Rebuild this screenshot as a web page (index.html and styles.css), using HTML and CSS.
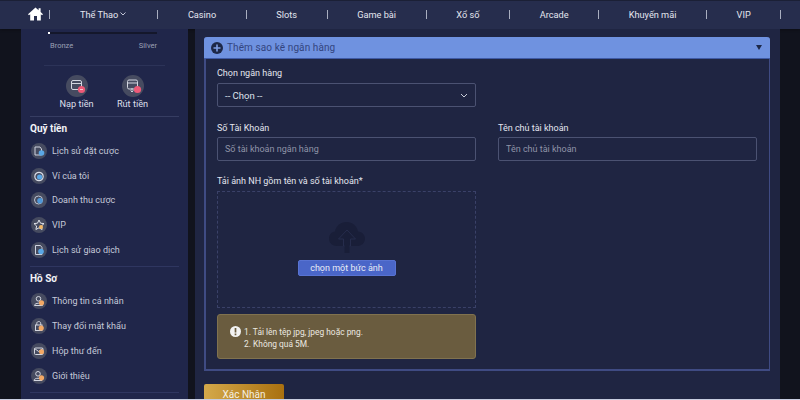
FILE: index.html
```html
<!DOCTYPE html>
<html lang="en">
<head>
  <meta charset="UTF-8" />
  <meta name="viewport" content="width=device-width, initial-scale=1.0"/>
  <title>Thêm sao kê ngân hàng</title>
  <link rel="stylesheet" href="styles.css">
</head>
<body>
  <nav class="topbar">
    <a class="nav-link nav-home">
      <svg width="15" height="14" viewBox="0 0 15 14"><path fill="#fff" d="M7.5 0.5 L0 7.2 L1 8.2 L2.2 7.2 V13.5 H6 V9 H9 V13.5 H12.8 V7.2 L14 8.2 L15 7.2 L12.6 5 V1.2 H10.6 V3.2 Z"/></svg>
    </a>
    <a class="nav-link nav-drop">Thể Thao
      <svg width="6" height="4" viewBox="0 0 6 4"><path fill="none" stroke="#d5d9e6" stroke-width="0.9" d="M0.5 0.5 L3 3 L5.5 0.5"/></svg>
    </a>
    <a class="nav-link">Casino</a>
    <a class="nav-link">Slots</a>
    <a class="nav-link">Game bài</a>
    <a class="nav-link">Xổ số</a>
    <a class="nav-link">Arcade</a>
    <a class="nav-link">Khuyến mãi</a>
    <a class="nav-link">VIP</a>
  </nav>

  <div class="page">
    <aside class="sidebar">
      <div class="rank">
        <div class="rank-bar"><span class="rank-dot"></span></div>
        <div class="rank-labels"><span>Bronze</span><span>Silver</span></div>
      </div>
      <div class="quick">
        <a class="quick-item">
          <span class="quick-icon">
            <svg width="22" height="22" viewBox="0 0 22 22"><rect x="5.5" y="5.5" width="10" height="9" rx="1.5" fill="none" stroke="#d3d6e0"/><path stroke="#d3d6e0" d="M6 8.5 H15"/><circle cx="15.5" cy="14.5" r="3.6" fill="#ee5a78"/><path stroke="#f7c5cf" d="M14 14.5 H17"/></svg>
          </span>
          Nạp tiền
        </a>
        <a class="quick-item">
          <span class="quick-icon">
            <svg width="22" height="22" viewBox="0 0 22 22"><rect x="5.5" y="5" width="10" height="9" rx="1.5" fill="none" stroke="#d3d6e0"/><path stroke="#d3d6e0" d="M6 8 H15 M10 13 V17 M8.5 15.5 L10 17 L11.5 15.5"/><circle cx="15.5" cy="14.5" r="3.6" fill="#ee5a78"/></svg>
          </span>
          Rút tiền
        </a>
      </div>

      <section class="menu">
        <h3>Quỹ tiền</h3>
        <a class="menu-item">
          <span class="menu-icon"><svg width="16" height="16" viewBox="0 0 16 16"><path fill="none" stroke="#cfd3df" d="M4 4 H9 L10.5 6 V12 H4 Z"/><circle cx="10.5" cy="10" r="2.8" fill="#5aa7e6"/></svg></span>
          Lịch sử đặt cược
        </a>
        <a class="menu-item">
          <span class="menu-icon"><svg width="16" height="16" viewBox="0 0 16 16"><circle cx="8" cy="8.5" r="4.2" fill="none" stroke="#d8dbe4" stroke-width="1.2"/><circle cx="8.6" cy="9" r="2.6" fill="#5aa7e6"/></svg></span>
          Ví của tôi
        </a>
        <a class="menu-item">
          <span class="menu-icon"><svg width="16" height="16" viewBox="0 0 16 16"><circle cx="7.5" cy="8" r="4" fill="none" stroke="#bfc4d2"/><circle cx="9" cy="8.8" r="2.8" fill="#4f97d8"/></svg></span>
          Doanh thu cược
        </a>
        <a class="menu-item">
          <span class="menu-icon"><svg width="16" height="16" viewBox="0 0 16 16"><path fill="none" stroke="#e1e3ea" d="M8 3 L9.5 6.2 L13 6.6 L10.4 9 L11.1 12.5 L8 10.8 L4.9 12.5 L5.6 9 L3 6.6 L6.5 6.2 Z"/><circle cx="10" cy="10" r="2" fill="#f3b765"/></svg></span>
          VIP
        </a>
        <a class="menu-item">
          <span class="menu-icon"><svg width="16" height="16" viewBox="0 0 16 16"><path fill="none" stroke="#cfd3df" d="M4.5 3.5 H9.5 L11 5.5 V12.5 H4.5 Z"/><circle cx="10" cy="9.5" r="2.8" fill="#5aa7e6"/></svg></span>
          Lịch sử giao dịch
        </a>
      </section>

      <section class="menu">
        <h3>Hồ Sơ</h3>
        <a class="menu-item">
          <span class="menu-icon"><svg width="16" height="16" viewBox="0 0 16 16"><circle cx="7.5" cy="5.8" r="2.3" fill="none" stroke="#d3d6e0"/><path fill="none" stroke="#d3d6e0" d="M3.5 12.5 C3.5 9.5 11.5 9.5 11.5 12.5 Z"/><circle cx="10.5" cy="9.8" r="2.6" fill="#f3a865"/></svg></span>
          Thông tin cá nhân
        </a>
        <a class="menu-item">
          <span class="menu-icon"><svg width="16" height="16" viewBox="0 0 16 16"><rect x="4.5" y="7" width="6.5" height="5.5" fill="none" stroke="#d3d6e0"/><path fill="none" stroke="#d3d6e0" d="M5.8 7 V5.2 C5.8 3 9.7 3 9.7 5.2 V7"/><circle cx="10.2" cy="10" r="2.6" fill="#f3a865"/></svg></span>
          Thay đổi mật khẩu
        </a>
        <a class="menu-item">
          <span class="menu-icon"><svg width="16" height="16" viewBox="0 0 16 16"><rect x="3.5" y="5" width="8.5" height="6.5" rx="1" fill="none" stroke="#d3d6e0"/><path fill="none" stroke="#d3d6e0" d="M3.5 5.5 L7.7 8.5 L12 5.5"/><circle cx="10.5" cy="8.8" r="2.5" fill="#f3a865"/></svg></span>
          Hộp thư đến
        </a>
        <a class="menu-item">
          <span class="menu-icon"><svg width="16" height="16" viewBox="0 0 16 16"><circle cx="7" cy="5.8" r="2.3" fill="none" stroke="#d3d6e0"/><path fill="none" stroke="#d3d6e0" d="M3 12.5 C3 9.5 11 9.5 11 12.5 Z"/><circle cx="10.5" cy="9.8" r="2.6" fill="#f3a865"/></svg></span>
          Giới thiệu
        </a>
      </section>
    </aside>

    <main class="content">
      <div class="card">
        <div class="card-head">
          <svg width="12" height="12" viewBox="0 0 12 12"><circle cx="6" cy="6" r="6" fill="#1d2848"/><path stroke="#7f9fe6" stroke-width="1.6" d="M6 2.5 V9.5 M2.5 6 H9.5"/></svg>
          <span class="card-title">Thêm sao kê ngân hàng</span>
          <span class="card-caret"></span>
        </div>
        <div class="card-body">
          <div class="field half">
            <label for="bank">Chọn ngân hàng</label>
            <div class="control select" id="bank">
              -- Chọn --
              <svg width="8" height="5" viewBox="0 0 8 5"><path fill="none" stroke="#c9cdd9" d="M1 1 L4 4 L7 1"/></svg>
            </div>
          </div>
          <div class="field-row">
            <div class="field">
              <label for="acc-no">Số Tài Khoản</label>
              <input class="control" id="acc-no" type="text" placeholder="Số tài khoản ngân hàng" />
            </div>
            <div class="field">
              <label for="acc-name">Tên chủ tài khoản</label>
              <input class="control" id="acc-name" type="text" placeholder="Tên chủ tài khoản" />
            </div>
          </div>
          <div class="field half">
            <label>Tải ảnh NH gồm tên và số tài khoản*</label>
            <div class="dropzone">
              <svg width="38" height="32" viewBox="0 0 38 32">
                <path fill="#191e38" d="M9 25 C3.5 25 1 21 1 17.5 C1 13.4 3.8 10.8 7 10.4 C8 4.6 12.8 1 18.5 1 C24.5 1 29 5 30 10.4 C34 10.6 37 13.6 37 17.6 C37 21.6 34 25 30 25 Z"/>
                <path fill="#191e38" stroke="#262c4c" stroke-width="1" d="M19 9 L10.5 18 H15.5 V25 H22.5 V18 H27.5 Z"/>
                <path fill="#191e38" d="M16.5 22 H21.5 V32 H16.5 Z"/>
              </svg>
              <button class="pick-btn" type="button">chọn một bức ảnh</button>
            </div>
            <div class="note">
              <svg width="11" height="11" viewBox="0 0 11 11"><circle cx="5.5" cy="5.5" r="5.5" fill="#f2f2f2"/><path stroke="#6b5d3f" stroke-width="1.7" d="M5.5 2 V6.6 M5.5 7.6 V9.3"/></svg>
              <ol>
                <li>Tải lên tệp jpg, jpeg hoặc png.</li>
                <li>Không quá 5M.</li>
              </ol>
            </div>
          </div>
        </div>
      </div>
      <button class="submit" type="button">Xác Nhận</button>
    </main>
  </div>
</body>
</html>
```

FILE: styles.css
```css
* {
  margin: 0;
  padding: 0;
  box-sizing: border-box;
  font-family: 'Roboto', 'Liberation Sans', sans-serif;
}

html {
  background: #c8cde0;
  overflow: hidden;
}

body {
  width: 800px;
  height: 399px;
  background: #11131d;
  overflow: hidden;
  display: flex;
  flex-direction: column;
}

.topbar {
  height: 29px;
  flex-shrink: 0;
  display: flex;
  align-items: center;
  padding: 0 0 1px 28px;
  background: #262d4d;
  box-shadow: inset 0 1px 0 #1b2036, 0 1px 3px rgba(0, 0, 0, 0.3);
}

.nav-link {
  height: 9px;
  padding: 0 29.6px;
  display: flex;
  align-items: center;
  gap: 2px;
  color: #e4e6ef;
  font-size: 9.2px;
  border-right: 1px solid #a9aec0;
}

.nav-home {
  padding: 0 6px 0 0;
}

.nav-drop {
  padding: 0 31px 0 30px;
}

.page {
  flex: 1;
  min-height: 0;
  display: flex;
  padding-left: 21px;
}

.sidebar {
  width: 167px;
  flex-shrink: 0;
  padding: 0 9px;
  background: #20264a;
  overflow: hidden;
}

.rank {
  margin: 0 14px;
  padding: 3px 0 14px;
  border-bottom: 1px solid #2c3358;
}

.rank-bar {
  width: 109px;
  height: 2px;
  margin-left: 4px;
  background: #14172b;
}

.rank-dot {
  display: block;
  width: 2px;
  height: 2px;
  background: #fff;
}

.rank-labels {
  margin: 7px 0 0 6px;
  width: 107px;
  display: flex;
  justify-content: space-between;
  color: #9ca1b5;
  font-size: 7.5px;
  line-height: 10px;
}

.quick {
  display: flex;
  gap: 23px;
  justify-content: center;
  padding: 9px 0 6px;
  border-bottom: 1px solid #363d62;
}

.quick-item {
  width: 33px;
  display: flex;
  flex-direction: column;
  align-items: center;
  gap: 1px;
  color: #dcdfe9;
  font-size: 9.2px;
  line-height: 12px;
  white-space: nowrap;
}

.quick-icon,
.menu-icon {
  display: flex;
  border-radius: 50%;
  background: #464b60;
}

.menu {
  padding: 6px 0 4px;
  border-bottom: 1px solid #2f3660;
}

.menu h3 {
  color: #f2f3f7;
  font-size: 10px;
  font-weight: 700;
  line-height: 12px;
  margin-bottom: 3.5px;
}

.menu-item {
  height: 24.8px;
  display: flex;
  align-items: center;
  gap: 5px;
  padding-left: 1px;
  color: #c6cad9;
  font-size: 9px;
}

.content {
  width: 585px;
  margin-left: 7px;
  padding: 8px 10px 0 9px;
  background: #1f2542;
}

.card {
  border: 1px solid #3f4b83;
  border-width: 0 1px 2px 2px;
  border-radius: 3px 3px 0 0;
}

.card-head {
  height: 22px;
  margin-left: -2px;
  margin-right: -1px;
  padding: 0 8px 0 7px;
  display: flex;
  align-items: center;
  gap: 4px;
  background: #6f92e0;
  border-radius: 3px 3px 0 0;
  border-bottom: 1px solid #3f5aa5;
}

.card-title {
  flex: 1;
  color: #33457f;
  font-size: 10px;
  letter-spacing: 0.1px;
}

.card-caret {
  width: 0;
  height: 0;
  border: 3px solid transparent;
  border-top: 5px solid #1d2848;
  border-bottom: 0;
}

.card-body {
  padding: 8px 12px 10px 11px;
}

.field label {
  display: block;
  margin-bottom: 4px;
  color: #e4e6ef;
  font-size: 9px;
  line-height: 12px;
}

.half {
  width: 259px;
}

.field-row {
  display: grid;
  grid-template-columns: 259px 259px;
  gap: 22px;
  margin: 15px 0 14px;
}

.field-row label {
  margin-bottom: 3px;
}

.control {
  width: 100%;
  height: 24px;
  padding: 0 7px;
  display: flex;
  align-items: center;
  justify-content: space-between;
  background: transparent;
  border: 1px solid #4b5272;
  border-radius: 2px;
  outline: none;
  color: #dfe2ec;
  font-size: 9px;
}

.select {
  font-size: 9.5px;
}

.control::placeholder {
  color: #8f94a8;
}

.dropzone {
  height: 117px;
  padding-top: 29px;
  display: flex;
  flex-direction: column;
  align-items: center;
  gap: 7px;
  border: 1px dashed #3a4168;
}

.pick-btn {
  width: 98px;
  height: 16px;
  background: #4a66c8;
  border: 1px solid #5873d2;
  border-radius: 2px;
  color: #e8ebf5;
  font-size: 9px;
}

.note {
  height: 45px;
  margin-top: 6px;
  padding: 11px 12px;
  display: flex;
  gap: 3px;
  background: #6a5c3f;
  border: 1px solid #80724f;
  border-radius: 3px;
}

.note ol {
  list-style: none;
}

.note li {
  counter-increment: step;
  color: #ece9e0;
  font-size: 8.4px;
  line-height: 12px;
}

.note li::before {
  content: counter(step) ". ";
}

.submit {
  display: block;
  width: 80px;
  height: 30px;
  margin-top: 13px;
  padding-bottom: 9px;
  background: linear-gradient(90deg, #d4a94a, #a9700f);
  border: none;
  border-radius: 2px;
  color: #f4efe2;
  font-size: 10px;
}
```
